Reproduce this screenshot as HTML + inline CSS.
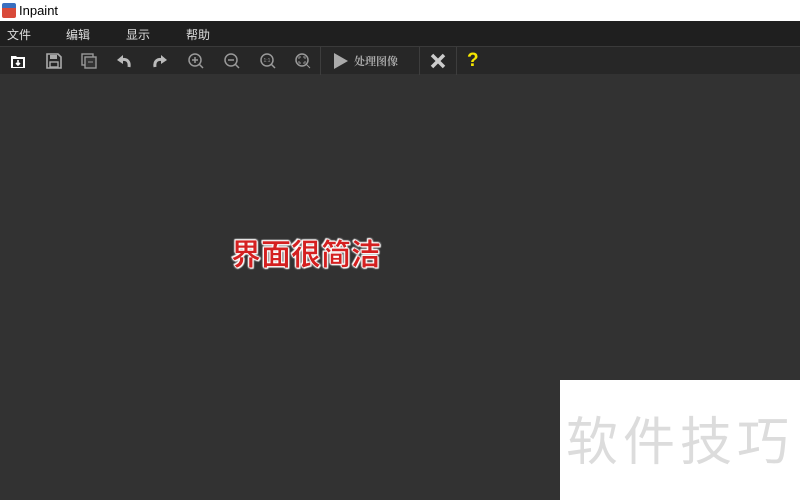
<!DOCTYPE html><html><head><meta charset="utf-8"><style>
*{margin:0;padding:0;box-sizing:border-box}
body{width:800px;height:500px;overflow:hidden;background:#323232;font-family:"Liberation Sans","Noto Sans CJK SC",sans-serif;position:relative}
.t{position:absolute;left:0;top:0;width:800px;height:21px;background:#fff;font-size:13px;color:#000}
.m{position:absolute;left:0;top:21px;width:800px;height:25px;background:#1f1f1f;color:#ddd;font-size:12px}
.m span{position:absolute;top:5px}
.tb{position:absolute;left:0;top:46px;width:800px;height:28px;background:#272727;border-top:1px solid #3a3a3a}
.tb svg{position:absolute;top:5px}
.sep{position:absolute;top:0;width:1px;height:28px;background:#3d3d3d}
</style></head><body>
<div class="t"><div style="position:absolute;left:2px;top:3px;width:14px;height:15px;background:linear-gradient(#3a6fc0 35%,#d84a3a 35%);border-radius:2px"></div><span style="position:absolute;left:19px;top:3px">Inpaint</span></div>
<div class="m"><span style="left:7px">文件</span><span style="left:66px">编辑</span><span style="left:126px">显示</span><span style="left:186px">帮助</span></div>
<div class="tb">
<svg style="left:9px" width="18" height="18" viewBox="0 0 18 18"><path d="M2 4h5l1 1h8v11H2z" fill="#fff"/><rect x="4" y="7" width="10" height="8" fill="#222"/><path d="M9 8v5M7 11l2 2 2-2" stroke="#fff" stroke-width="1.6" fill="none"/></svg>
<svg style="left:45px" width="18" height="18" viewBox="0 0 18 18"><path d="M2 2h11l3 3v11H2z" fill="none" stroke="#aaa" stroke-width="1.6"/><rect x="5" y="3" width="7" height="4" fill="#aaa"/><rect x="5" y="10" width="8" height="5" fill="none" stroke="#aaa" stroke-width="1.4"/></svg>
<svg style="left:80px" width="18" height="18" viewBox="0 0 18 18"><rect x="2" y="2" width="11" height="11" fill="none" stroke="#999" stroke-width="1.4"/><rect x="5" y="5" width="11" height="11" fill="#333" stroke="#999" stroke-width="1.4"/><path d="M8 10h5" stroke="#999"/></svg>
<svg style="left:115px" width="18" height="18" viewBox="0 0 18 18"><path d="M14 15c1-6-3-9-8-7" fill="none" stroke="#bbb" stroke-width="3"/><path d="M2 8l6-5v9z" fill="#bbb"/></svg>
<svg style="left:151px" width="18" height="18" viewBox="0 0 18 18"><path d="M4 15c-1-6 3-9 8-7" fill="none" stroke="#bbb" stroke-width="3"/><path d="M16 8l-6-5v9z" fill="#bbb"/></svg>
<svg style="left:187px" width="18" height="18" viewBox="0 0 18 18"><circle cx="8" cy="8" r="6" fill="none" stroke="#999" stroke-width="1.5"/><path d="M12 12l4 4M5 8h6M8 5v6" stroke="#999" stroke-width="1.5"/></svg>
<svg style="left:223px" width="18" height="18" viewBox="0 0 18 18"><circle cx="8" cy="8" r="6" fill="none" stroke="#999" stroke-width="1.5"/><path d="M12 12l4 4M5 8h6" stroke="#999" stroke-width="1.5"/></svg>
<svg style="left:259px" width="18" height="18" viewBox="0 0 18 18"><circle cx="8" cy="8" r="6" fill="none" stroke="#999" stroke-width="1.5"/><path d="M12 12l4 4" stroke="#999" stroke-width="1.5"/><text x="8" y="10" font-size="5" fill="#999" text-anchor="middle">1:1</text></svg>
<svg style="left:294px" width="18" height="18" viewBox="0 0 18 18"><circle cx="8" cy="8" r="6" fill="none" stroke="#999" stroke-width="1.5"/><path d="M12 12l4 4M5 7V5h2M11 7V5H9M5 9v2h2M11 9v2H9" stroke="#999" stroke-width="1"/></svg>
<div class="sep" style="left:320px"></div>
<svg style="left:332px" width="18" height="18" viewBox="0 0 18 18"><path d="M2 1l14 8-14 8z" fill="#aaa"/></svg>
<span style="position:absolute;left:354px;top:6px;font-size:11px;color:#aaa;font-family:'Noto Serif CJK SC',serif;font-weight:bold">处理图像</span>
<div class="sep" style="left:419px"></div>
<svg style="left:429px" width="18" height="18" viewBox="0 0 18 18"><path d="M3 3l12 12M15 3L3 15" stroke="#ccc" stroke-width="3.5"/></svg>
<div class="sep" style="left:456px"></div>
<span style="position:absolute;left:467px;top:3px;font-size:19px;font-weight:bold;color:#f5e600">?</span>
</div>
<div style="position:absolute;left:231px;top:232px;font-size:30px;font-weight:bold;color:#d42020;font-family:'Noto Sans CJK SC',sans-serif;-webkit-text-stroke:0.5px #fff;text-shadow:0 0 2px #fff,0 0 2px #fff,1px 1px 1px #fff,-1px -1px 1px #fff;line-height:40px;white-space:nowrap">界面很简洁</div>
<div style="position:absolute;left:560px;top:380px;width:240px;height:120px;background:#fff"></div>
<div style="position:absolute;left:566px;top:403px;font-size:52px;color:#dcdcdc;font-family:'Noto Sans CJK SC',sans-serif;line-height:70px;letter-spacing:5px;white-space:nowrap">软件技巧</div>
</body></html>
